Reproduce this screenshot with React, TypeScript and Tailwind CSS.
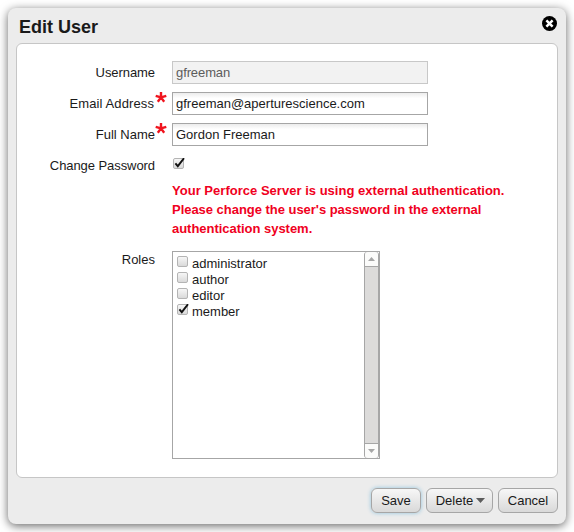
import type { ReactNode } from "react";

const Checkbox = ({ checked = false }: { checked?: boolean }) => (
  <svg width="14" height="14" viewBox="0 0 14 14" className="block shrink-0">
    <defs>
      <linearGradient id="boxFill" x1="0" y1="0" x2="0" y2="1">
        <stop offset="0" stopColor="#f8f8f8" />
        <stop offset="1" stopColor="#d8d8d8" />
      </linearGradient>
    </defs>
    <rect x="0.5" y="0.5" width="10" height="10" rx="1.5" fill="url(#boxFill)" stroke="#b4b4b4" />
    {checked && <path d="M2.4 5.4 L4.8 8.2 L11 0.2" fill="none" stroke="#111" strokeWidth="1.9" />}
  </svg>
);

const Row = ({
  label,
  required,
  labelClass = "",
  children,
}: {
  label: string;
  required?: boolean;
  labelClass?: string;
  children: ReactNode;
}) => (
  <div className="flex">
    <div className="relative mr-[17px] w-[138px] shrink-0 text-right leading-[23px]">
      <span className={labelClass}>{label}</span>
      {required && (
        <svg className="absolute -right-3 top-0" width="12" height="12" viewBox="0 0 12 12">
          <path
            d="M6 5.6V0M6 5.4L0.7 3.8M6 5.4L11.3 3.8M6 5.4L2.8 9.8M6 5.4L9.2 9.8"
            stroke="#f0141e"
            strokeWidth="2.4"
            fill="none"
          />
        </svg>
      )}
    </div>
    {children}
  </div>
);

const Field = ({ value }: { value: string }) => (
  <div className="h-[23px] w-64 border border-[#a6a6a6] bg-white bg-linear-to-b from-[#ececec] to-white to-25% pl-[3px] leading-[22px]">
    {value}
  </div>
);

const Button = ({ children, className = "" }: { children: ReactNode; className?: string }) => (
  <button
    className={`flex h-[25px] items-center justify-center rounded-[6px] border border-[#a6a6a6] bg-linear-to-b from-[#f7f7f7] to-[#d9d9d9] leading-[23px] ${className}`}
  >
    {children}
  </button>
);

const roles = [
  { name: "administrator", checked: false },
  { name: "author", checked: false },
  { name: "editor", checked: false },
  { name: "member", checked: true },
];

export default function App() {
  return (
    <div className="h-[532px] w-[574px] overflow-hidden bg-white p-2 font-['Liberation_Sans',Arial,sans-serif] text-[13px] text-[#1a1a1a]">
      <div className="flex h-[516px] w-[558px] flex-col rounded-lg bg-[#ececec] px-2 shadow-[0_2px_10px_rgba(0,0,0,0.6)]">
        <header className="flex h-[35px] shrink-0 justify-between pl-[3px] pr-px">
          <h1 className="pt-[7px] text-lg font-bold leading-6">Edit User</h1>
          <svg className="mt-2" width="15" height="15" viewBox="0 0 15 15">
            <circle cx="7.5" cy="7.5" r="7.5" fill="#000" />
            <path d="M4.4 4.4L10.6 10.6M10.6 4.4L4.4 10.6" stroke="#fff" strokeWidth="2.5" />
          </svg>
        </header>

        <main className="h-[435px] shrink-0 rounded-md border border-[#c6c6c6] bg-white pt-[17px]">
          <div className="flex flex-col gap-2">
            <Row label="Username" labelClass="tracking-[-0.07px]">
              <div className="h-[23px] w-64 border border-[#c8c8c8] bg-[#f2f2f2] pl-[3px] leading-[22px] tracking-[-0.1px] text-[#5c5c5c]">
                gfreeman
              </div>
            </Row>
            <Row label="Email Address" required labelClass="mr-px tracking-[0.1px]">
              <Field value="gfreeman@aperturescience.com" />
            </Row>
            <Row label="Full Name" required>
              <Field value="Gordon Freeman" />
            </Row>
            <Row label="Change Password" labelClass="tracking-[-0.07px]">
              <div className="pl-px pt-1">
                <Checkbox checked />
              </div>
            </Row>
          </div>
          <p className="ml-[155px] mt-1 w-[350px] font-bold leading-[19px] text-[#f00021]">
            <span className="block tracking-[0.02px]">Your Perforce Server is using external authentication.</span>
            <span className="block tracking-[-0.03px]">Please change the user's password in the external</span>
            <span className="block tracking-[-0.03px]">authentication system.</span>
          </p>
          <div className="mt-[10px]">
            <Row label="Roles">
              <div className="mt-[3px] flex h-52 w-52 justify-between border border-[#a6a6a6]">
                <ul className="pl-1 pt-1">
                  {roles.map((role) => (
                    <li key={role.name} className="flex h-4 gap-px">
                      <Checkbox checked={role.checked} />
                      <span className="leading-4">{role.name}</span>
                    </li>
                  ))}
                </ul>
                <div className="flex w-[15px] flex-col rounded-[3px] border-x border-[#a6a6a6] bg-[#dcdbda]">
                  <div className="flex h-[15px] items-center justify-center rounded-t-[3px] border-b border-[#a6a6a6] bg-[#fbfbfa]">
                    <svg width="7" height="4" viewBox="0 0 7 4">
                      <path d="M3.5 0L7 4H0Z" fill="#a6a6a6" />
                    </svg>
                  </div>
                  <div className="flex-1" />
                  <div className="flex h-[15px] items-center justify-center rounded-b-[3px] border-t border-[#a6a6a6] bg-[#fbfbfa]">
                    <svg width="7" height="4" viewBox="0 0 7 4">
                      <path d="M3.5 4L7 0H0Z" fill="#a6a6a6" />
                    </svg>
                  </div>
                </div>
              </div>
            </Row>
          </div>
        </main>

        <footer className="flex justify-end gap-[5px] pt-[10px]">
          <Button className="w-[50px] shadow-[0_0_4px_#8fc3dd]">Save</Button>
          <Button className="w-[67px] gap-[3px] pl-[2px]">
            Delete
            <svg width="9" height="5" viewBox="0 0 9 5">
              <path d="M0 0H9L4.5 5Z" fill="#5c5c5c" />
            </svg>
          </Button>
          <Button className="w-[60px]">Cancel</Button>
        </footer>
      </div>
    </div>
  );
}
